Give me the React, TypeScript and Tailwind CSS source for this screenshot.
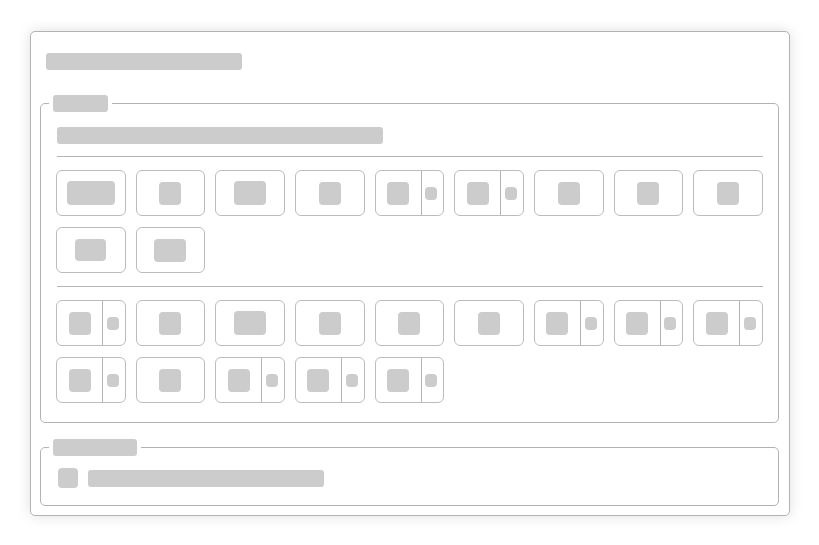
type Kind = "wide" | "square" | "mid" | "split" | "flat" | "flatMid";

const topRows: Kind[] = ["wide", "square", "mid", "square", "split", "split", "square", "square", "square", "flat", "flatMid"];
const bottomRows: Kind[] = [
  "split", "square", "mid", "square", "square", "square", "split", "split", "split",
  "split", "square", "split", "split", "split",
];

function Block({ className }: { className: string }) {
  return <div className={`rounded-[4px] bg-[#cccccc] ${className}`} />;
}

function SkeletonButton({ kind }: { kind: Kind }) {
  if (kind === "split") {
    return (
      <div className="flex h-[46px] w-[69.66px] rounded-[6px] border border-[#bcbcbc]">
        <div className="flex w-[46px] items-center justify-center border-r border-[#b4b4b4]">
          <Block className="h-[23px] w-[22px]" />
        </div>
        <div className="flex flex-1 items-center justify-center pr-[2px]">
          <Block className="h-[13px] w-[12px] rounded-[3px]" />
        </div>
      </div>
    );
  }

  const inner = {
    wide: "h-[24px] w-[48px]",
    square: "h-[23px] w-[22px]",
    mid: "h-[24px] w-[32px]",
    flat: "h-[22px] w-[31px]",
    flatMid: "h-[23px] w-[32px]",
  }[kind];

  return (
    <div className="flex h-[46px] w-[69.66px] items-center justify-center rounded-[6px] border border-[#bcbcbc]">
      <Block className={inner} />
    </div>
  );
}

export default function App() {
  return (
    <div className="min-h-screen bg-white pl-[30px] pt-[31px]">
      <div className="w-[760px] rounded-[5px] border border-[#b3b3b3] bg-white pb-[9px] pl-[9px] pr-[10px] pt-[21px] shadow-[0_0_14px_rgba(0,0,0,0.13)]">
        <div className="ml-[6px] h-[17px] w-[196px] rounded-[3px] bg-[#cccccc]" />

        <fieldset className="mt-[25px] rounded-[5px] border border-[#b3b3b3] px-[8px] pb-[19px]">
          <legend className="px-[4px]">
            <div className="h-[17px] w-[55px] rounded-[3px] bg-[#cccccc]" />
          </legend>
          <div className="px-[7px] pt-[15px]">
            <div className="ml-[1px] h-[17px] w-[326px] rounded-[3px] bg-[#cccccc]" />
            <div className="ml-[1px] mt-[12px] h-px bg-[#b5b5b5]" />
            <div className="mt-[13px] flex flex-wrap gap-x-[10px] gap-y-[11px]">
              {topRows.map((k, i) => (
                <SkeletonButton key={i} kind={k} />
              ))}
            </div>
            <div className="ml-[1px] mt-[13px] h-px bg-[#b5b5b5]" />
            <div className="mt-[13px] flex flex-wrap gap-x-[10px] gap-y-[11px]">
              {bottomRows.map((k, i) => (
                <SkeletonButton key={i} kind={k} />
              ))}
            </div>
          </div>
        </fieldset>

        <fieldset className="mt-[16px] rounded-[5px] border border-[#b3b3b3] px-[8px] pb-[17px]">
          <legend className="px-[4px]">
            <div className="h-[17px] w-[84px] rounded-[3px] bg-[#cccccc]" />
          </legend>
          <div className="flex items-center gap-[10px] px-[7px] pt-[12px]">
            <div className="ml-[2px] h-[20px] w-[20px] rounded-[4px] bg-[#cccccc]" />
            <div className="h-[17px] w-[236px] rounded-[3px] bg-[#cccccc]" />
          </div>
        </fieldset>
      </div>
    </div>
  );
}
